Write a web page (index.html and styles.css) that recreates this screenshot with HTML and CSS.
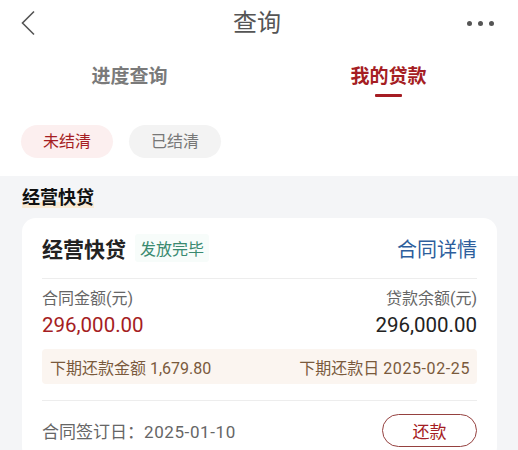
FILE: index.html
```html
<!DOCTYPE html>
<html lang="zh-CN">
<head>
  <meta charset="UTF-8">
  <title>查询</title>
  <meta name="viewport" content="width=device-width, initial-scale=1">
  <link rel="stylesheet" href="styles.css">
</head>
<body>
  <div class="navbar">
    <span class="nav-back">
      <svg width="16" height="26" viewBox="0 0 16 26"><path d="M14 1.5 L2.5 13 L14 24.5" fill="none" stroke="#555" stroke-width="1.6"/></svg>
    </span>
    <h1 class="nav-title">查询</h1>
    <span class="nav-more">
      <i></i><i></i><i></i>
    </span>
  </div>

  <div class="tabs">
    <div class="tab">进度查询</div>
    <div class="tab active">我的贷款</div>
  </div>

  <div class="filter">
    <span class="chip active">未结清</span>
    <span class="chip">已结清</span>
  </div>

  <div class="section">
    <h2 class="section-title"><span>经营快贷</span></h2>
    <div class="card">
      <div class="card-head">
        <span class="card-name">经营快贷</span>
        <span class="status">发放完毕</span>
        <a class="detail-link" href="#">合同详情</a>
      </div>
      <div class="amounts">
        <div class="amount">
          <div class="label">合同金额(元)</div>
          <div class="value red">296,000.00</div>
        </div>
        <div class="amount right">
          <div class="label">贷款余额(元)</div>
          <div class="value">296,000.00</div>
        </div>
      </div>
      <div class="next-pay">
        <span>下期还款金额 1,679.80</span>
        <span>下期还款日 <span class="date">2025-02-25</span></span>
      </div>
      <div class="card-foot">
        <span class="sign-date">合同签订日：<span class="date">2025-01-10</span></span>
        <button class="repay-btn">还款</button>
      </div>
    </div>
  </div>
</body>
</html>
```

FILE: styles.css
```css
:root {
  --red: #a51d23;
  --grey-text: #666;
  --bg: #f4f5f7;
  --line: #ededed;
}
body {
  margin: 0;
  background: #fff;
  font-family: Roboto, "Noto Sans CJK SC", sans-serif;
  color: #222;
  overflow: hidden;
}
.navbar {
  height: 46px;
  display: grid;
  grid-template-columns: 1fr auto 1fr;
  align-items: center;
  padding: 0 24px 0 20px;
}
.nav-back {
  display: flex;
  align-items: center;
}
.nav-title {
  margin: 0;
  font-size: 24px;
  font-weight: 400;
  line-height: 30px;
  color: #555;
}
.nav-more {
  justify-self: end;
  display: flex;
  gap: 6px;
}
.nav-more i {
  width: 5px;
  height: 5px;
  border-radius: 50%;
  background: #555;
}
.tabs {
  display: flex;
  height: 58px;
}
.tab {
  flex: 1;
  text-align: center;
  padding-top: 19px;
  font-size: 19px;
  line-height: 24px;
  font-weight: 700;
  color: #7a7a7a;
}
.tab.active {
  color: var(--red);
}
.tab.active::after {
  content: "";
  display: block;
  width: 27px;
  height: 3px;
  margin: 5px auto 0;
  background: var(--red);
  border-radius: 1px;
}
.filter {
  display: flex;
  gap: 16px;
  padding: 21px 21px 18px;
}
.chip {
  height: 33px;
  line-height: 33px;
  width: 92px;
  text-align: center;
  border-radius: 17px;
  font-size: 16px;
  background: #f3f3f3;
  color: #777;
}
.chip.active {
  background: #fcefef;
  color: var(--red);
}
.section {
  background: var(--bg);
  padding: 9px 21px 0 22px;
  min-height: 300px;
}
.section-title {
  margin: 0 0 7px;
  font-size: 18px;
  line-height: 26px;
  font-weight: 700;
  color: #111;
}
.section-title span {
  background: linear-gradient(transparent 70%, rgba(252, 226, 190, 0.6) 70%);
}
.card {
  background: #fff;
  border-radius: 14px;
  padding: 0 20px;
}
.card-head {
  height: 60px;
  display: flex;
  align-items: center;
  border-bottom: 1px solid var(--line);
}
.card-name {
  font-size: 21px;
  font-weight: 700;
  color: #222;
}
.status {
  margin-left: 9px;
  padding: 2px 5px;
  font-size: 16px;
  color: #3a8a70;
  background: #f7fcfa;
  border-radius: 3px;
}
.detail-link {
  margin-left: auto;
  font-size: 20px;
  color: #2d5e9c;
  text-decoration: none;
}
.amounts {
  display: flex;
  justify-content: space-between;
  padding-top: 9px;
}
.amount.right {
  text-align: right;
}
.label {
  font-size: 16px;
  line-height: 22px;
  color: var(--grey-text);
}
.value {
  font-size: 20.5px;
  line-height: 28px;
  margin-top: 1px;
  color: #222;
}
.value.red {
  color: var(--red);
}
.next-pay {
  margin-top: 10px;
  height: 35px;
  display: flex;
  align-items: center;
  justify-content: space-between;
  padding: 0 7px 0 8px;
  background: #fbf5f0;
  border-radius: 4px;
  font-size: 16px;
  color: #7a5a3c;
}
.date {
  letter-spacing: 0.6px;
}
.card-foot {
  margin-top: 16px;
  border-top: 1px solid var(--line);
  padding: 13px 0 14px;
  display: flex;
  align-items: center;
  justify-content: space-between;
}
.sign-date {
  font-size: 17px;
  color: var(--grey-text);
}
.repay-btn {
  width: 95px;
  height: 33px;
  border: 1.5px solid #95413f;
  border-radius: 17px;
  background: #fff;
  color: var(--red);
  font-family: inherit;
  font-size: 17px;
}
```
